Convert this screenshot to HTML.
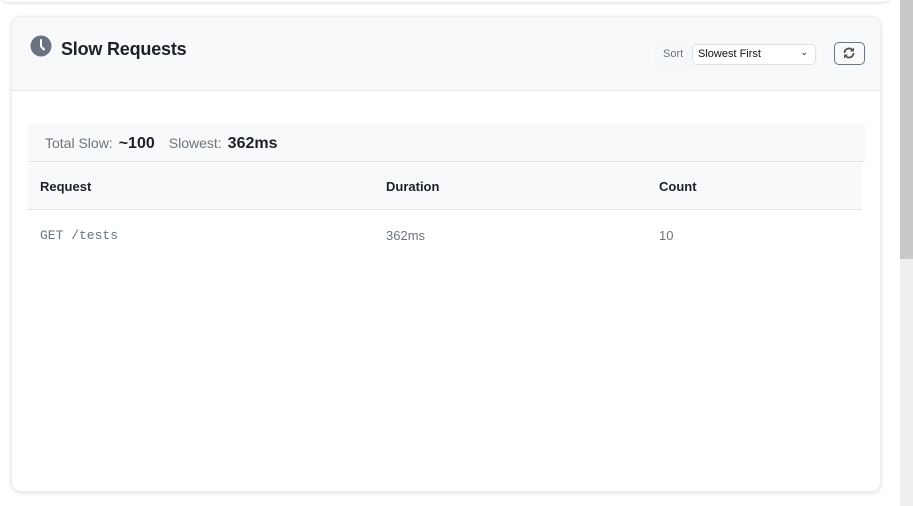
<!DOCTYPE html>
<html><head><style>
*{box-sizing:border-box;margin:0;padding:0}
body{width:913px;height:506px;background:#fff;font-family:"Liberation Sans",sans-serif;position:relative;overflow:hidden;color:#212529}
.top{position:absolute;left:0;top:-20px;width:891px;height:22px;background:#fff;box-shadow:0 1px 3px rgba(0,0,0,.15);border-radius:0 0 8px 8px}
.sb{position:absolute;left:900px;top:0;width:13px;height:506px;background:#efefef}
.sb div{height:259px;background:#c9c9c9}
.card{position:absolute;left:11px;top:16px;width:870px;height:476px;border-radius:10px;background:#fff;box-shadow:0 1px 4px rgba(0,0,0,.12);overflow:hidden;border:1px solid #eceef0}
.hd{height:74px;background:#f8f9fa;border-bottom:1px solid #e3e6e9;position:relative}
.hd h2{position:absolute;left:49px;top:22px;font-size:18px;font-weight:600;color:#1c2128;letter-spacing:-0.2px}
.ic{position:absolute;left:18px;top:18px}
.sortbox{position:absolute;left:643px;top:26px;width:162px;height:26px;background:#f6f7f9;border-radius:4px}
.sortbox span{position:absolute;left:8px;top:5px;font-size:11px;color:#6c757d}
.sel{position:absolute;left:680px;top:27px;width:124px;height:21px;border:1px solid #dee2e6;border-radius:5px;background:#fff;font-size:11px;padding:3px 5px;color:#111}
.sel i{position:absolute;right:7px;top:2px;font-style:normal;font-size:9px}
.btn{position:absolute;left:822px;top:25px;width:31px;height:23px;border:1.5px solid #6c757d;border-radius:5px;background:#f8f9fa}
.stats{position:absolute;left:16px;top:107px;width:837px;height:38px;background:#f8f9fa;border-bottom:1px solid #e3e6e9;font-size:14px;color:#6c757d;padding:11px 17px}
.stats b{color:#1c2128;font-size:16px;margin:0 14px 0 6px}
.th{position:absolute;left:16px;top:146px;width:834px;height:47px;background:#f8f9fa;border-bottom:1px solid #e3e6e9;font-size:13px;font-weight:700;color:#1c2128}
.th span,.tr span{position:absolute;top:16px}
.tr{position:absolute;left:16px;top:193px;width:834px;height:48px;font-size:13px;color:#6c757d}
.tr span{top:18px}
</style></head><body>
<div class="top"></div>
<div class="sb"><div></div></div>
<div class="card">
<div class="hd">
<svg class="ic" width="22" height="22" viewBox="0 0 22 22"><circle cx="11" cy="11" r="10.5" fill="#6b7280"/><path d="M11 5v6.5l3 3" stroke="#fff" stroke-width="2" fill="none" stroke-linecap="round"/></svg>
<h2>Slow Requests</h2>
<div class="sortbox"><span>Sort</span></div>
<div class="sel">Slowest First<i>&#8964;</i></div>
<div class="btn"><svg width="28" height="20" viewBox="0 0 28 20"><g stroke="#555" stroke-width="1.8" fill="none"><path d="M9.5 10a4.5 4.5 0 0 1 8-2.8"/><path d="M18.5 10a4.5 4.5 0 0 1-8 2.8"/></g><path d="M19 4.5v4h-4z" fill="#555"/><path d="M9 15.5v-4h4z" fill="#555"/></svg></div>
</div>
<div class="stats">Total Slow:<b>~100</b>Slowest:<b>362ms</b></div>
<div class="th"><span style="left:12px">Request</span><span style="left:358px">Duration</span><span style="left:631px">Count</span></div>
<div class="tr"><span style="left:12px;font-family:'Liberation Mono',monospace">GET /tests</span><span style="left:358px">362ms</span><span style="left:631px">10</span></div>
</div>
</body></html>
